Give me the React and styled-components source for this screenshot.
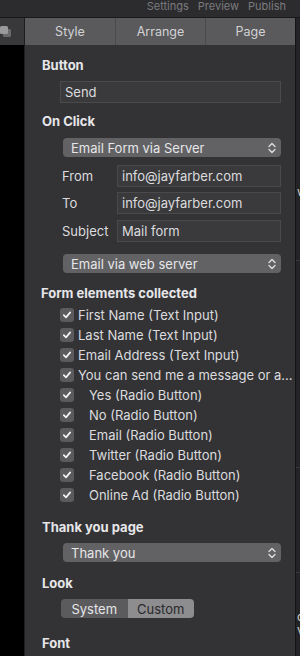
import React from 'react';
import styled, { createGlobalStyle } from 'styled-components';

const GlobalStyle = createGlobalStyle`
  html, body {
    margin: 0;
    padding: 0;
    background: #000;
  }
  body {
    font-family: Inter, "Noto Sans", sans-serif;
    -webkit-font-smoothing: antialiased;
  }
`;

const Screen = styled.div`
  width: 300px;
  height: 656px;
  overflow: hidden;
  display: flex;
  flex-direction: column;
  background: #000;
`;

const TopBar = styled.div`
  flex: none;
  height: 17px;
  background: #2c2c2e;
  border-bottom: 1px solid #18181a;
  display: flex;
  justify-content: flex-end;
  gap: 9px;
  padding-right: 14px;
`;

const TopLink = styled.span`
  font-size: 11px;
  line-height: 12px;
  color: #7b7b7f;
`;

const Main = styled.div`
  flex: 1;
  display: flex;
  min-height: 0;
`;

const LeftRail = styled.div`
  width: 24px;
  flex: none;
  display: flex;
  flex-direction: column;
`;

const RailHead = styled.div`
  height: 27px;
  background: #38383b;
  display: flex;
  align-items: center;
`;

const Inspector = styled.div`
  width: 270px;
  flex: none;
  border-left: 1px solid #1e1e20;
  display: flex;
  flex-direction: column;
  background: #333336;
`;

const TabBar = styled.div`
  height: 27px;
  flex: none;
  display: grid;
  grid-template-columns: repeat(3, 1fr);
  background: #5a5a5d;
`;

const Tab = styled.div`
  display: flex;
  align-items: center;
  justify-content: center;
  font-size: 12.5px;
  color: #d2d2d4;
  border-left: ${({ first }) => (first ? 'none' : '1px solid #4a4a4d')};
`;

const Panel = styled.div`
  flex: 1;
  padding: 12px 14px 0 17px;
  display: flex;
  flex-direction: column;
`;

const Title = styled.div`
  font-size: 13px;
  font-weight: 700;
  line-height: 16px;
  color: #e6e6e8;
  margin-top: ${({ mt }) => mt || 0}px;
  margin-left: ${({ ml }) => ml || 0}px;
`;

const TextField = styled.div`
  height: 22px;
  box-sizing: border-box;
  background: #3a3a3d;
  border: 1px solid #4a4a4d;
  padding-left: 4px;
  display: flex;
  align-items: center;
  font-size: 13px;
  color: #dcdcde;
  margin-left: ${({ ml }) => ml || 0}px;
  margin-top: ${({ mt }) => mt || 0}px;
  flex: ${({ grow }) => (grow ? 1 : 'none')};
`;

const Select = styled.div`
  height: 19px;
  box-sizing: border-box;
  margin-left: 21px;
  margin-top: ${({ mt }) => mt || 0}px;
  background: #626265;
  border-radius: 4px;
  padding: 0 5px 0 8px;
  display: flex;
  align-items: center;
  justify-content: space-between;
  font-size: 13px;
  color: #e6e6e8;
`;

const FieldRow = styled.div`
  display: flex;
  align-items: center;
  margin-left: 20px;
  margin-top: ${({ mt }) => mt || 0}px;
`;

const FieldLabel = styled.span`
  width: 55px;
  flex: none;
  font-size: 13px;
  color: #dcdcde;
`;

const CheckList = styled.div`
  margin-top: 4px;
  margin-left: 18px;
  display: flex;
  flex-direction: column;
`;

const CheckRow = styled.div`
  height: 20px;
  display: flex;
  align-items: center;
  gap: 4px;
  font-size: 13px;
  color: #dcdcde;
  white-space: nowrap;
`;

const Box = styled.span`
  width: 14px;
  height: 14px;
  flex: none;
  border-radius: 3px;
  background: #5b5b5e;
  display: flex;
  align-items: center;
  justify-content: center;
`;

const CheckText = styled.span`
  padding-left: ${({ indent }) => (indent ? 11 : 0)}px;
`;

const Segmented = styled.div`
  margin-top: 8px;
  margin-left: 19px;
  width: 133px;
  height: 19px;
  display: flex;
  border-radius: 4px;
  overflow: hidden;
`;

const Segment = styled.div`
  flex: 1;
  display: flex;
  align-items: center;
  justify-content: center;
  font-size: 13px;
  background: ${({ active }) => (active ? '#8d8d90' : '#5b5b5e')};
  color: ${({ active }) => (active ? '#2a2a2c' : '#e6e6e8')};
`;

const EdgeLine = styled.div`
  width: 1px;
  flex: none;
  background: #141416;
`;

const Strip = styled.div`
  width: 4px;
  flex: none;
  position: relative;
  overflow: hidden;
  background: #242426;
`;

const StripGlyph = styled.span`
  position: absolute;
  left: 1px;
  top: ${({ top }) => top}px;
  font-size: 12px;
  line-height: 12px;
  color: #d0d0d0;
`;

const StripRule = styled.div`
  position: absolute;
  left: 0;
  right: 0;
  top: ${({ top }) => top}px;
  height: 1px;
  background: #3a3a3c;
`;

const Chevrons = () => (
  <svg width="8" height="12" viewBox="0 0 8 12" fill="none">
    <path d="M1 4.5 L4 1.5 L7 4.5" stroke="#e0e0e2" strokeWidth="1.3" strokeLinecap="round" strokeLinejoin="round" />
    <path d="M1 7.5 L4 10.5 L7 7.5" stroke="#e0e0e2" strokeWidth="1.3" strokeLinecap="round" strokeLinejoin="round" />
  </svg>
);

const Check = () => (
  <svg width="10" height="10" viewBox="0 0 10 10" fill="none">
    <path d="M1.8 5.2 L4 7.4 L8.2 2.4" stroke="#f2f2f2" strokeWidth="1.7" strokeLinecap="round" strokeLinejoin="round" />
  </svg>
);

const LayersIcon = () => (
  <svg width="12" height="12" viewBox="0 0 12 12">
    <rect x="3" y="3" width="8" height="8" rx="1.5" fill="#6a6a6d" />
    <rect x="0" y="0" width="8" height="8" rx="1.5" fill="#9a9a9d" />
  </svg>
);

const fields = [
  { label: 'First Name (Text Input)' },
  { label: 'Last Name (Text Input)' },
  { label: 'Email Address (Text Input)' },
  { label: 'You can send me a message or a...' },
  { label: 'Yes (Radio Button)', indent: true },
  { label: 'No (Radio Button)', indent: true },
  { label: 'Email (Radio Button)', indent: true },
  { label: 'Twitter (Radio Button)', indent: true },
  { label: 'Facebook (Radio Button)', indent: true },
  { label: 'Online Ad (Radio Button)', indent: true },
];

const App = () => {
  return (
    <Screen>
      <GlobalStyle />
      <TopBar>
        <TopLink>Settings</TopLink>
        <TopLink>Preview</TopLink>
        <TopLink>Publish</TopLink>
      </TopBar>
      <Main>
        <LeftRail>
          <RailHead>
            <LayersIcon />
          </RailHead>
        </LeftRail>
        <Inspector>
          <TabBar>
            <Tab first>Style</Tab>
            <Tab>Arrange</Tab>
            <Tab>Page</Tab>
          </TabBar>
          <Panel>
            <Title>Button</Title>
            <TextField ml={18} mt={8}>Send</TextField>

            <Title mt={10}>On Click</Title>
            <Select mt={9}>
              Email Form via Server
              <Chevrons />
            </Select>
            <FieldRow mt={8}>
              <FieldLabel>From</FieldLabel>
              <TextField grow>info@jayfarber.com</TextField>
            </FieldRow>
            <FieldRow mt={5}>
              <FieldLabel>To</FieldLabel>
              <TextField grow>info@jayfarber.com</TextField>
            </FieldRow>
            <FieldRow mt={6}>
              <FieldLabel>Subject</FieldLabel>
              <TextField grow>Mail form</TextField>
            </FieldRow>
            <Select mt={12}>
              Email via web server
              <Chevrons />
            </Select>

            <Title mt={12} ml={-1}>Form elements collected</Title>
            <CheckList>
              {fields.map((f) => (
                <CheckRow key={f.label}>
                  <Box>
                    <Check />
                  </Box>
                  <CheckText indent={f.indent}>{f.label}</CheckText>
                </CheckRow>
              ))}
            </CheckList>

            <Title mt={14}>Thank you page</Title>
            <Select mt={8}>
              Thank you
              <Chevrons />
            </Select>

            <Title mt={13}>Look</Title>
            <Segmented>
              <Segment>System</Segment>
              <Segment active>Custom</Segment>
            </Segmented>

            <Title mt={17}>Font</Title>
          </Panel>
        </Inspector>
        <EdgeLine />
        <Strip>
          <StripGlyph top={168}>w</StripGlyph>
          <StripRule top={260 - 18} />
          <StripRule top={467 - 18} />
          <StripRule top={572 - 18} />
          <StripGlyph top={611 - 18}>c</StripGlyph>
          <StripGlyph top={626 - 18}>V</StripGlyph>
        </Strip>
      </Main>
    </Screen>
  );
};

export default App;
